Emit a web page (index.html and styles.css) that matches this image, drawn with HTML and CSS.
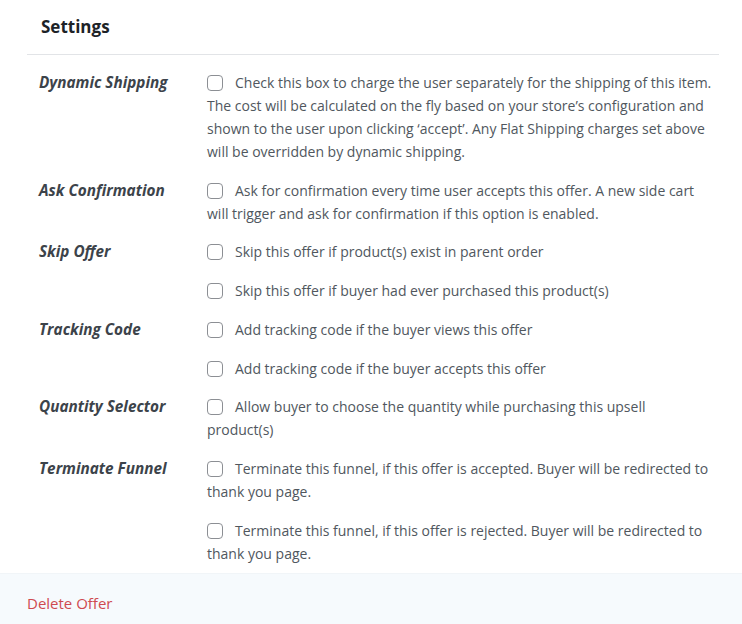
FILE: index.html
```html
<!DOCTYPE html>
<html>
<head>
<meta charset="utf-8">
<link rel="stylesheet" href="styles.css">
</head>
<body>
<div class="panel">
  <div class="panel-head"><h2 class="title">Settings</h2></div>
  <div class="rows">
    <div class="row">
      <div class="label">Dynamic Shipping</div>
      <div class="opts">
        <label class="opt"><span class="box"></span>Check this box to charge the user separately for the shipping of this item. The cost will be calculated on the fly based on your store’s configuration and shown to the user upon clicking ‘accept’. Any Flat Shipping charges set above will be overridden by dynamic shipping.</label>
      </div>
    </div>
    <div class="row">
      <div class="label">Ask Confirmation</div>
      <div class="opts">
        <label class="opt"><span class="box"></span>Ask for confirmation every time user accepts this offer. A new side cart will trigger and ask for confirmation if this option is enabled.</label>
      </div>
    </div>
    <div class="row">
      <div class="label">Skip Offer</div>
      <div class="opts">
        <label class="opt"><span class="box"></span>Skip this offer if product(s) exist in parent order</label>
        <label class="opt"><span class="box"></span>Skip this offer if buyer had ever purchased this product(s)</label>
      </div>
    </div>
    <div class="row">
      <div class="label">Tracking Code</div>
      <div class="opts">
        <label class="opt"><span class="box"></span>Add tracking code if the buyer views this offer</label>
        <label class="opt"><span class="box"></span>Add tracking code if the buyer accepts this offer</label>
      </div>
    </div>
    <div class="row">
      <div class="label">Quantity Selector</div>
      <div class="opts">
        <label class="opt"><span class="box"></span>Allow buyer to choose the quantity while purchasing this upsell product(s)</label>
      </div>
    </div>
    <div class="row">
      <div class="label">Terminate Funnel</div>
      <div class="opts">
        <label class="opt"><span class="box"></span>Terminate this funnel, if this offer is accepted. Buyer will be redirected to thank you page.</label>
        <label class="opt"><span class="box"></span>Terminate this funnel, if this offer is rejected. Buyer will be redirected to thank you page.</label>
      </div>
    </div>
  </div>
  <div class="footer"><a class="delete" href="#">Delete Offer</a></div>
</div>
</body>
</html>
```
FILE: styles.css
```css
html, body {
  margin: 0;
  padding: 0;
  background: #ffffff;
}
body {
  font-family: "Open Sans", "Noto Sans", sans-serif;
  color: #50575e;
}
.panel {
  width: 742px;
}
.panel-head {
  margin: 0 23px 0 27px;
  height: 54px;
  border-bottom: 1px solid #e2e4e7;
  display: flex;
  align-items: center;
}
.title {
  margin: 0 0 0 14px;
  font-size: 17px;
  font-weight: 700;
  color: #1d2327;
  padding-bottom: 2px;
}
.rows {
  padding: 16px 30px 8px 39px;
  display: flex;
  flex-direction: column;
  gap: 15.5px;
}
.row {
  display: grid;
  grid-template-columns: 168px 1fr;
}
.label {
  font-size: 15.3px;
  font-weight: 700;
  font-style: italic;
  color: #3c434a;
  line-height: 23px;
}
.opts {
  display: flex;
  flex-direction: column;
  gap: 16px;
}
.opt {
  font-size: 14px;
  line-height: 23px;
  letter-spacing: 0;
}
.box {
  display: inline-block;
  width: 16px;
  height: 16px;
  box-sizing: border-box;
  border: 1px solid #8c8f94;
  border-radius: 4px;
  vertical-align: -3px;
  margin-right: 12px;
  background: #fff;
}
.footer {
  background: #f6fafd;
  height: 60px;
  padding: 18px 27px 0;
  box-sizing: border-box;
  border-top: 1px solid #f1f5f8;
}
.delete {
  color: #cf4a50;
  text-decoration: none;
  font-size: 15px;
  line-height: 20px;
}
```
